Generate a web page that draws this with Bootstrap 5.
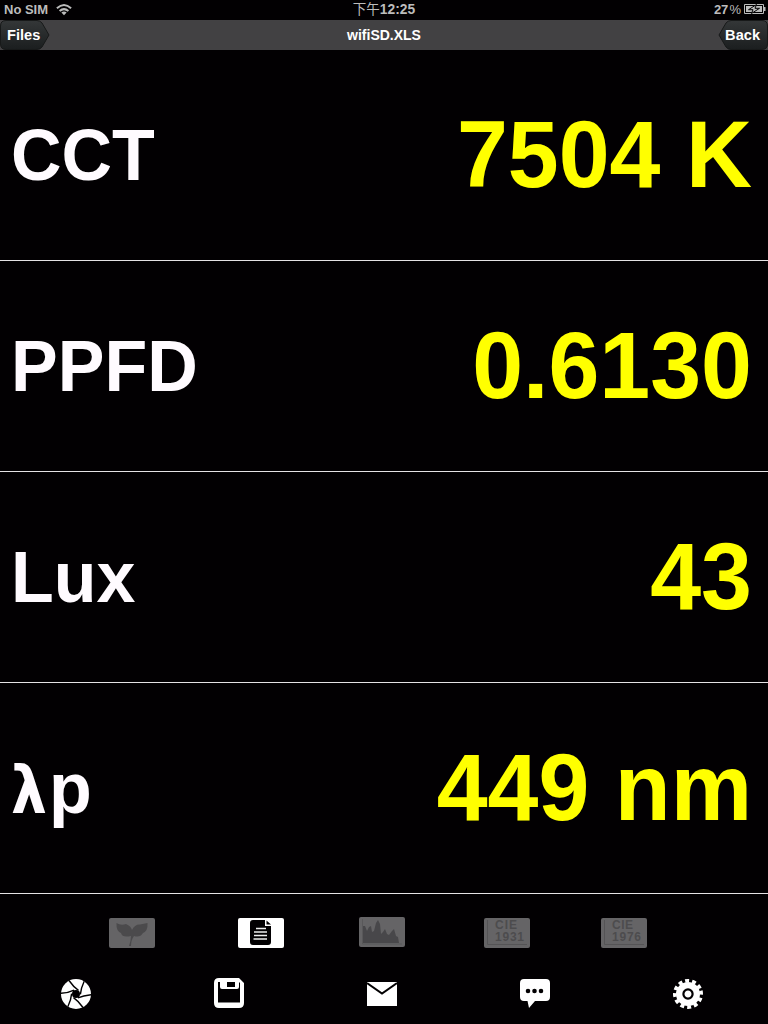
<!DOCTYPE html>
<html lang="zh-TW">
<head>
<meta charset="utf-8">
<meta name="viewport" content="width=device-width, initial-scale=1">
<title>wifiSD.XLS</title>
<link href="https://cdn.jsdelivr.net/npm/bootstrap@5.3.0/dist/css/bootstrap.min.css" rel="stylesheet">
<style>
body{background:#020002;font-family:"Liberation Sans","Noto Sans CJK TC",sans-serif;height:1024px;overflow:hidden}
.statusbar{height:20px;font-size:13px;line-height:20px;color:#bcbcbc;font-weight:700;display:grid;grid-template-columns:1fr auto 1fr}
.clock{font-size:13.8px}
.clock .zh{font-weight:400;font-family:"Noto Sans CJK TC",sans-serif;line-height:1;font-size:13.5px}
.titlebar{height:30px;background:#424143;color:#fff;font-weight:700;font-size:14px;line-height:30px;display:grid;grid-template-columns:1fr auto 1fr}
.arrow-btn{width:50px;height:30px;position:relative;color:#fff;font-weight:700;font-size:14.6px;line-height:30px;border:0;padding:0 7px;background:none}
.arrow-btn svg{position:absolute;left:0;top:0}
.arrow-btn span{position:relative}
.reading{height:211px;border-bottom:1px solid #e4e2e4;padding:0 16px 0 11px}
.reading-name{color:#fffbff;font-size:70px;font-weight:700;line-height:1;transform:scaleY(1.045);white-space:nowrap}
.reading-value{color:#ff0;font-size:91.5px;font-weight:700;line-height:1;transform:scaleY(1.025);white-space:nowrap}
.lambda{font-family:"DejaVu Sans Condensed","DejaVu Sans",sans-serif;font-size:63px;line-height:0;letter-spacing:2px}
.modes{height:54px;padding:24px 0 0 109px}
.modes svg,.tools svg{display:block}
.mode-b{margin-left:83px}.mode-c{margin:-1px 0 0 75px}.mode-d{margin-left:79px}.mode-e{margin-left:71px}
.tools{height:76px;padding:31px 4px 0 0}
.tools .col{display:flex;justify-content:center}
.disk{margin-top:-1px}
</style>
</head>
<body>
<header>
  <div class="statusbar">
    <div class="d-flex ps-1"><span>No SIM</span>
      <svg class="ms-2" width="16" height="20" viewBox="0 0 16 20" fill="none" stroke="#bcbcbc" stroke-width="2"><path d="M.9 8.200Q8 1.800 15.100 8.200M3.600 11Q8 7.200 12.400 11"/><path d="M5.400 12.400Q8 10.400 10.600 12.400L8 15.200Z" fill="#bcbcbc" stroke="none"/></svg>
    </div>
    <div class="clock"><span class="zh">下午</span>12:25</div>
    <div class="d-flex justify-content-end"><span>27</span><span class="fw-normal">&#8202;%</span>
      <svg width="27" height="20" viewBox="-3 0 27 20"><path d="M.5 4.500H19.500V13.500H.5Z" fill="none" stroke="#bcbcbc"/><path d="M19.500 7H21.500V11H19.500Z" fill="#bcbcbc"/><path d="M2 6H18V12H2Z" fill="#bcbcbc"/><path d="M12.500 4.500L4.500 9.700H9L7.500 13.500L15.500 8.300H11Z" fill="#bcbcbc" stroke="#020002" stroke-width="1"/></svg>
    </div>
  </div>
  <nav class="titlebar">
    <div><button class="arrow-btn d-block text-start" type="button"><svg width="50" height="30"><defs><linearGradient id="g" x2="0" y2="1"><stop stop-color="#343738"/><stop offset="1" stop-color="#1b1e1f"/></linearGradient></defs><path d="M6 .5H37Q40 .5 42 3L49 15L42 27Q40 29.500 37 29.500H6Q.5 29.500 .5 24V6Q.5 .5 6 .5Z" fill="url(#g)" stroke="#171919"/></svg><span>Files</span></button></div>
    <div>wifiSD.XLS</div>
    <div class="d-flex justify-content-end"><button class="arrow-btn text-end pe-2" type="button"><svg width="50" height="30"><path d="M44 .5H13Q10 .5 8 3L1 15L8 27Q10 29.500 13 29.500H44Q49.500 29.500 49.500 24V6Q49.500 .5 44 .5Z" fill="url(#g)" stroke="#171919"/></svg><span>Back</span></button></div>
  </nav>
</header>
<main>
  <section class="reading d-flex justify-content-between align-items-center"><div class="reading-name">CCT</div><div class="reading-value">7504 K</div></section>
  <section class="reading d-flex justify-content-between align-items-center"><div class="reading-name">PPFD</div><div class="reading-value">0.6130</div></section>
  <section class="reading d-flex justify-content-between align-items-center"><div class="reading-name">Lux</div><div class="reading-value">43</div></section>
  <section class="reading d-flex justify-content-between align-items-center"><div class="reading-name"><span class="lambda">λ</span>p</div><div class="reading-value">449 nm</div></section>
</main>
<footer>
  <div class="modes d-flex align-items-start">
    <svg width="46" height="30"><rect width="46" height="30" rx="2" fill="#656466"/><path d="M7.500 5Q12 8 17 6Q22 8 23 12Q26 6 31 6.500L38.500 5Q39 13 34 15Q31 20 25 18Q22 22 22 28H20Q22 22 22 18Q13 20 12 15Q7 13 7.500 5Z" fill="#4b4a4c"/></svg>
    <svg class="mode-b" width="46" height="30"><rect width="46" height="30" rx="2" fill="#fff"/><path d="M15 2H27V8H33V24Q33 27 30 27H15Q12 27 12 24V5Q12 2 15 2ZM28.500 2.500L33 6.500H28.500Z" fill="#020002"/><path d="M18 10.500H28M16 14H29M16 17.500H29M15.500 21H29" stroke="#eee" stroke-width="1.500"/></svg>
    <svg class="mode-c" width="46" height="30"><rect width="46" height="30" rx="2" fill="#656466"/><path d="M3.500 2V27H43" fill="none" stroke="#59585a"/><path d="M4 26V9H6L8 14L10 10L12 9L13 15L15 14L17 6L19 3L21 7L22 17L24 15L26 12L28 17L30 18L33 14L35 12L37 19L39 20L40 26Z" fill="#48474a"/></svg>
    <svg class="mode-d" width="46" height="30" font-family="Liberation Sans" font-weight="700" font-size="12" fill="#4d4c4e"><rect width="46" height="30" rx="2" fill="#656466"/><path d="M3.500 2V26.500H43" fill="none" stroke="#555456"/><text x="11" y="10.500" textLength="22">CIE</text><text x="11" y="23" textLength="29">1931</text></svg>
    <svg class="mode-e" width="46" height="30" font-family="Liberation Sans" font-weight="700" font-size="12" fill="#4d4c4e"><rect width="46" height="30" rx="2" fill="#656466"/><path d="M3.500 2V26.500H43" fill="none" stroke="#555456"/><text x="11" y="10.500" textLength="21">CIE</text><text x="11" y="23" textLength="29">1976</text></svg>
  </div>
  <div class="tools row g-0">
    <div class="col"><svg width="30" height="30" viewBox="-15 -15 30 30"><circle r="15" fill="#fff"/><circle r="4" fill="#020002"/><g stroke="#020002" stroke-width="1.400" fill="none"><path d="M-7 -13.500Q-2.500 -7 2.500 -3.600"/><path d="M-7 -13.500Q-2.500 -7 2.500 -3.600" transform="rotate(60)"/><path d="M-7 -13.500Q-2.500 -7 2.500 -3.600" transform="rotate(120)"/><path d="M-7 -13.500Q-2.500 -7 2.500 -3.600" transform="rotate(180)"/><path d="M-7 -13.500Q-2.500 -7 2.500 -3.600" transform="rotate(240)"/><path d="M-7 -13.500Q-2.500 -7 2.500 -3.600" transform="rotate(300)"/></g></svg></div>
    <div class="col"><svg class="disk" width="30" height="30"><path fill="#fff" fill-rule="evenodd" d="M5 0H25L30 5V25Q30 30 25 30H5Q0 30 0 25V5Q0 0 5 0ZM4 4V24.500H26V5L25 4V9Q25 11 23 11H8Q6 11 6 9V4ZM13 4V9H21V4Z"/></svg></div>
    <div class="col"><svg width="30" height="30"><path fill="#fff" d="M0 3H30V27H0Z"/><path d="M0 4L15 14.500L30 4" fill="none" stroke="#020002" stroke-width="2"/></svg></div>
    <div class="col"><svg width="30" height="30"><path fill="#fff" d="M4 0H26Q30 0 30 4V18Q30 22 26 22H15L9 29L7.500 22H4Q0 22 0 18V4Q0 0 4 0Z"/><path d="M8 12h.01M14.500 12h.01M21 12h.01" stroke="#020002" stroke-width="4.600" stroke-linecap="round"/></svg></div>
    <div class="col"><svg width="30" height="30" viewBox="-15 -15 30 30"><circle r="13.200" fill="none" stroke="#fff" stroke-width="3.600" stroke-dasharray="3.900 3.012" transform="rotate(-14)"/><circle r="12" fill="#fff"/><circle r="4.600" fill="#fff" stroke="#020002" stroke-width="2.200"/></svg></div>
  </div>
</footer>
<script src="https://cdn.jsdelivr.net/npm/bootstrap@5.3.0/dist/js/bootstrap.bundle.min.js"></script>
</body>
</html>
